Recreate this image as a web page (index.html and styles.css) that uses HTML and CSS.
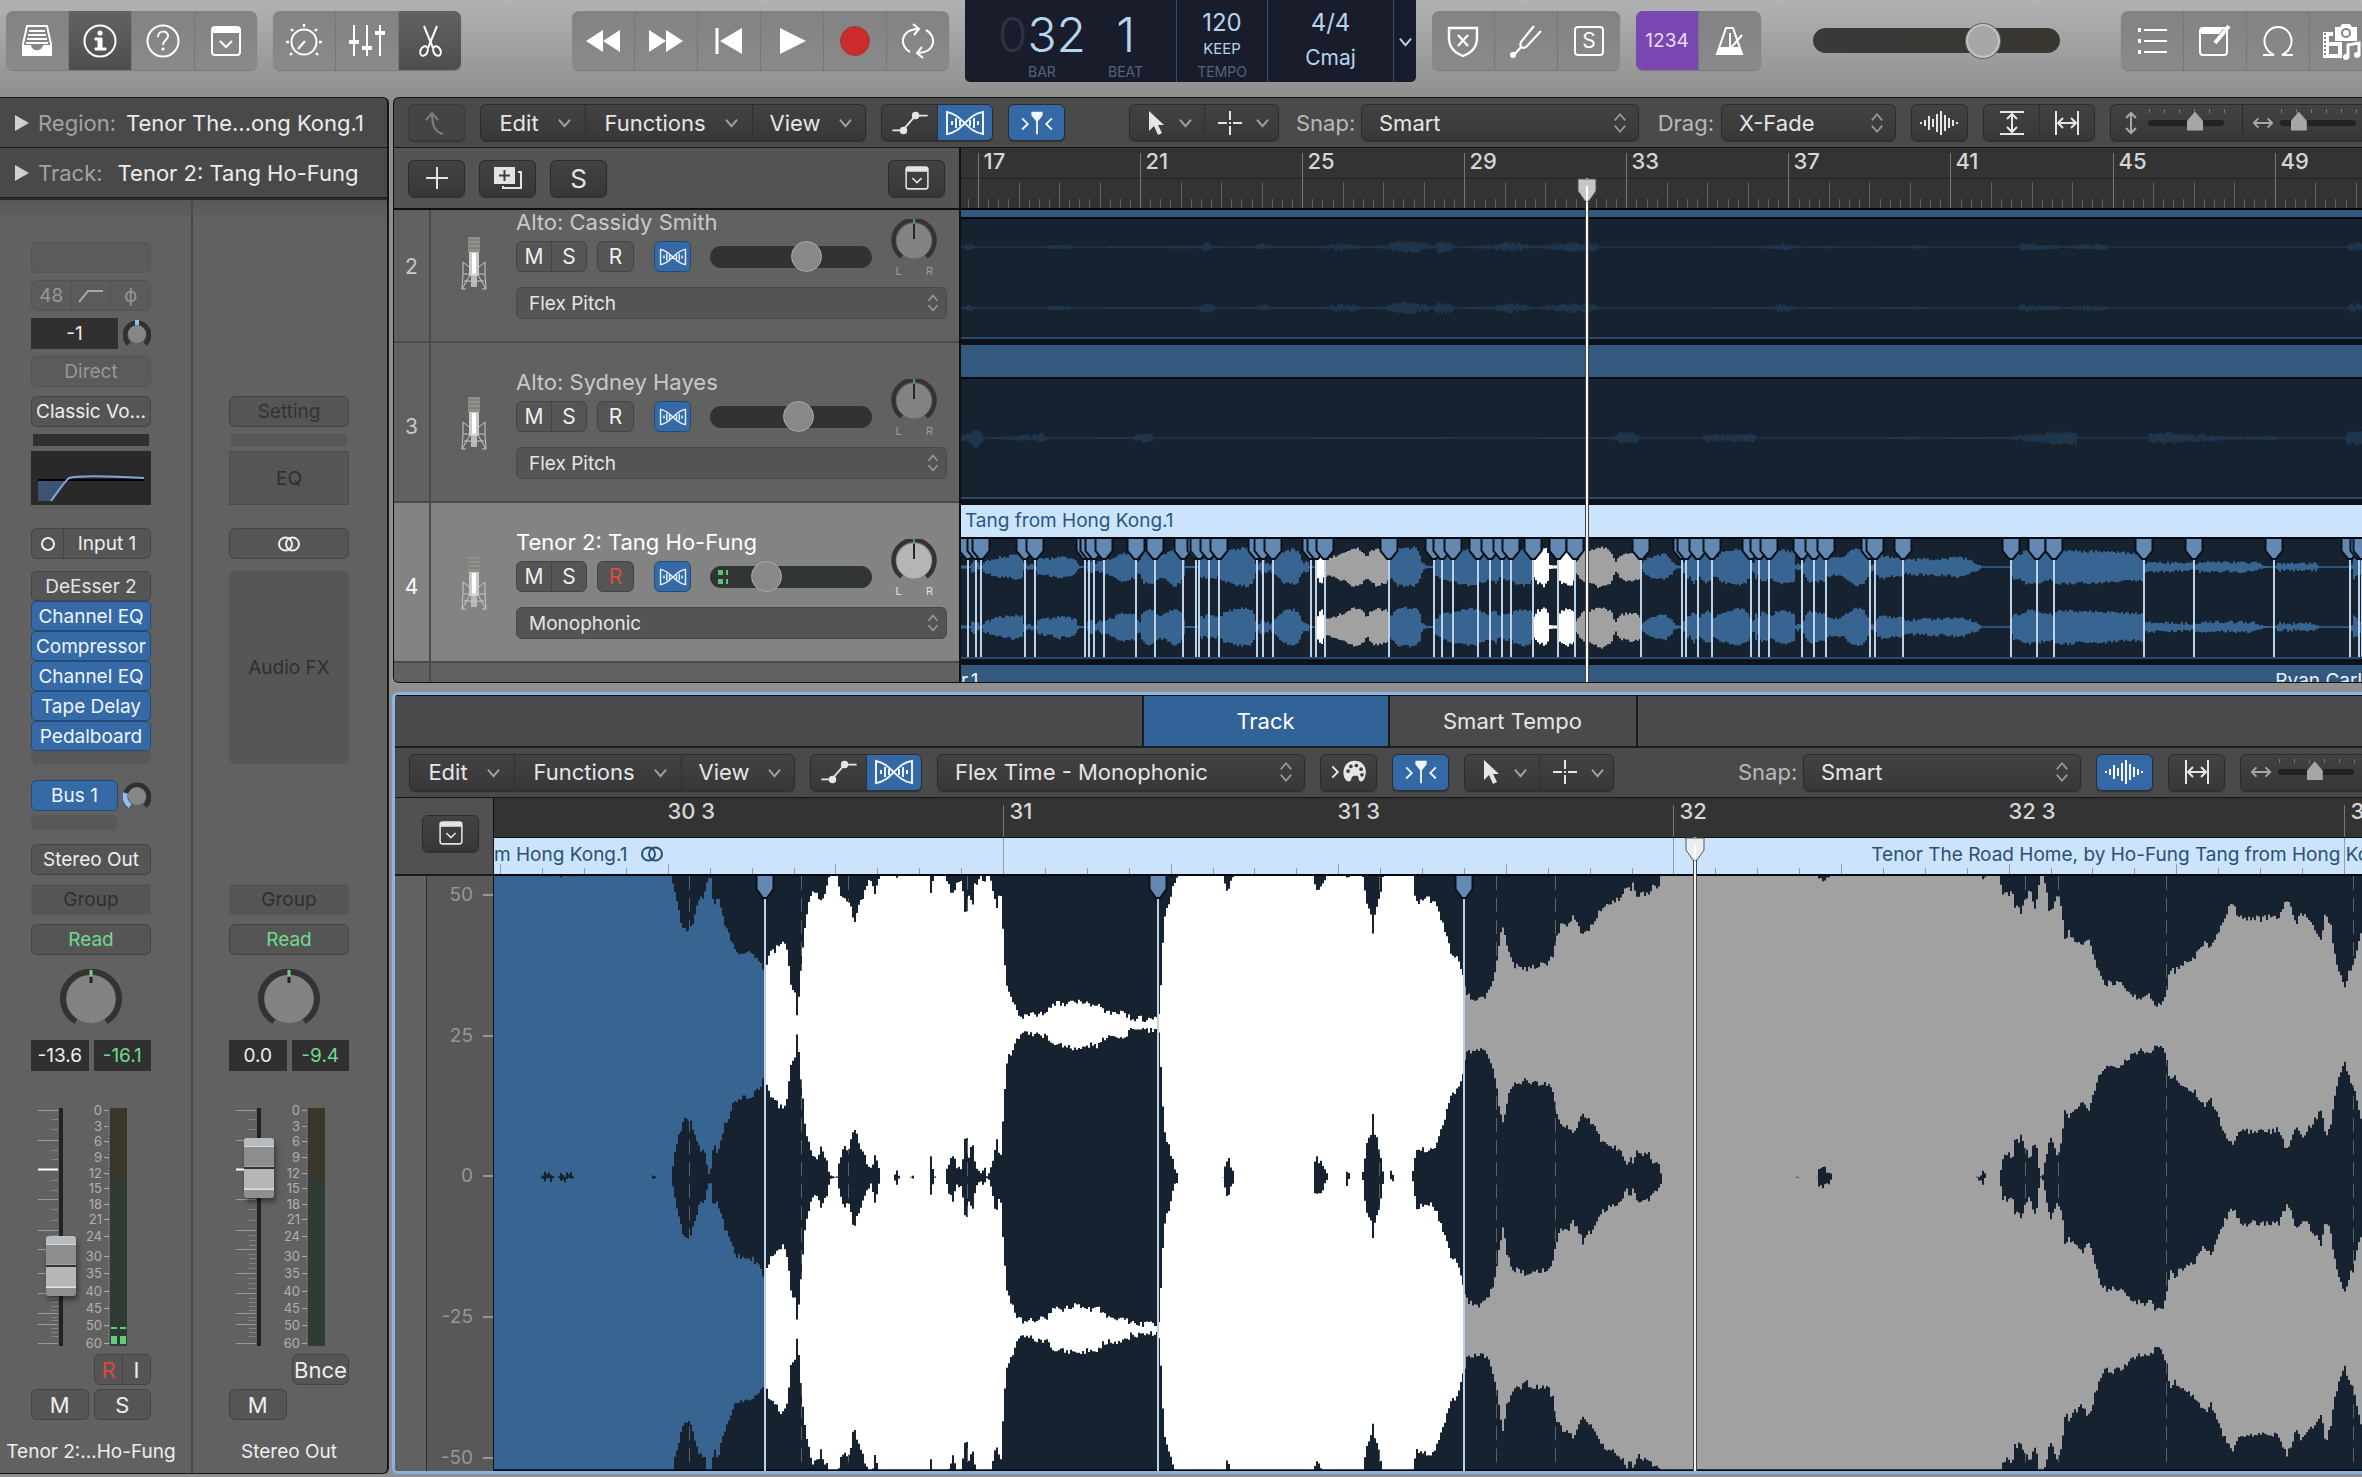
FILE: index.html
```html
<!DOCTYPE html>
<html lang="en">
<head>
    <meta charset="UTF-8">
    <meta name="viewport" content="width=device-width, initial-scale=1.0">
    <title>Tracks</title>
    <link rel="stylesheet" href="styles.css">
</head>
<body>

    <!-- Icon sprite -->
    <svg class="sprite" aria-hidden="true">
        <symbol id="i-library" viewBox="0 0 36 36"><path d="M8 3h20l4 18v11H4V21z" fill="none" stroke="currentColor" stroke-width="2"/><path d="M10 8h16M9 12h18M8 16h20M7 20h22" stroke="currentColor" stroke-width="2"/><path d="M4 22h8c1 7 11 7 12 0h8v10H4z" fill="currentColor"/></symbol>
        <symbol id="i-info" viewBox="0 0 36 36"><circle cx="18" cy="18" r="15.5" fill="none" stroke="currentColor" stroke-width="2"/><circle cx="18" cy="10" r="2.6" fill="currentColor"/><path d="M13 15h7v10h4v2H13v-2h3v-8h-3z" fill="currentColor" stroke="currentColor"/></symbol>
        <symbol id="i-help" viewBox="0 0 36 36"><circle cx="18" cy="18" r="15.5" fill="none" stroke="currentColor" stroke-width="2"/><path d="M13 14c0-7 10-7 10-1 0 4-5 4-5 9" fill="none" stroke="currentColor" stroke-width="2"/><circle cx="18" cy="26" r="1.6" fill="currentColor"/></symbol>
        <symbol id="i-panel" viewBox="0 0 36 36"><rect x="4" y="4" width="28" height="28" rx="3" fill="none" stroke="currentColor" stroke-width="2"/><path d="M4 4h28v6H4z" fill="currentColor"/><path d="M12 18l6 6 6-6" fill="none" stroke="currentColor" stroke-width="2"/></symbol>
        <symbol id="i-dial" viewBox="0 0 40 40"><circle cx="20" cy="21" r="12.5" fill="none" stroke="currentColor" stroke-width="2"/><path d="M14 28l7-8" stroke="currentColor" stroke-width="2"/><path d="M20 3v3M7 8l2 2M33 8l-2 2M2 21h3M35 21h3M6 34l2-2M34 34l-2-2" stroke="currentColor" stroke-width="2.4"/></symbol>
        <symbol id="i-mixer" viewBox="0 0 40 40"><path d="M7 4v31M20 4v31M33 4v31" stroke="currentColor" stroke-width="2"/><path d="M2 19h10v4H2zM15 25h10v4H15zM28 10h10v4H28z" fill="currentColor"/></symbol>
        <symbol id="i-scissors" viewBox="0 0 36 36"><path d="M12 3l9 22M25 3l-9 22" stroke="currentColor" stroke-width="2"/><ellipse cx="12" cy="28" rx="3.5" ry="5" transform="rotate(25 12 28)" fill="none" stroke="currentColor" stroke-width="2"/><ellipse cx="25" cy="28" rx="3.5" ry="5" transform="rotate(-25 25 28)" fill="none" stroke="currentColor" stroke-width="2"/></symbol>
        <symbol id="i-rewind" viewBox="0 0 36 28"><path d="M18 3v22L1 14zM35 3v22L18 14z" fill="currentColor"/></symbol>
        <symbol id="i-forward" viewBox="0 0 36 28"><path d="M1 3v22l17-11zM18 3v22l17-11z" fill="currentColor"/></symbol>
        <symbol id="i-start" viewBox="0 0 36 28"><path d="M6 1v26" stroke="currentColor" stroke-width="3"/><path d="M31 1v26L9 14z" fill="currentColor"/></symbol>
        <symbol id="i-play" viewBox="0 0 36 28"><path d="M6 1v26l26-13z" fill="currentColor"/></symbol>
        <symbol id="i-cycle" viewBox="0 0 40 40"><path d="M12 31C1 25 2 9 20 8M15 3l6 5-5 6M28 9c11 6 10 22-8 23M25 37l-6-5 5-6" fill="none" stroke="currentColor" stroke-width="2"/></symbol>
        <symbol id="i-shield" viewBox="0 0 36 36"><path d="M4 5h28v10c0 10-6 15-14 18C10 30 4 25 4 15z" fill="none" stroke="currentColor" stroke-width="2.4"/><path d="M13 12l10 11M23 12L13 23" stroke="currentColor" stroke-width="2.2"/></symbol>
        <symbol id="i-fork" viewBox="0 0 36 36"><path d="M26 3L13 19c-2 5 2 8 6 4L33 8M14 23L5 33" fill="none" stroke="currentColor" stroke-width="2.2"/><circle cx="5" cy="32" r="3" fill="currentColor"/></symbol>
        <symbol id="i-metronome" viewBox="0 0 36 36"><path d="M14 5h7l9 26H5z" fill="none" stroke="currentColor" stroke-width="2"/><path d="M7 24h21l3 8H4zM17 10h2v14h-2z" fill="currentColor"/><path d="M17 27L30 12" stroke="currentColor" stroke-width="2"/></symbol>
        <symbol id="i-list" viewBox="0 0 36 36"><path d="M10 7h23M10 18h23M10 29h23" stroke="currentColor" stroke-width="2"/><path d="M4 5h3v4H4zM4 16h3v4H4zM4 27h3v4H4z" fill="currentColor"/></symbol>
        <symbol id="i-note" viewBox="0 0 36 36"><rect x="3" y="5" width="27" height="27" rx="3" fill="none" stroke="currentColor" stroke-width="2"/><path d="M3 5h24l-5 6H3z" fill="currentColor"/><path d="M18 20L32 3" stroke="currentColor" stroke-width="4"/></symbol>
        <symbol id="i-loop" viewBox="0 0 36 36"><path d="M3 32h11c-16-8-10-28 4-28s20 20 4 28h11" fill="none" stroke="currentColor" stroke-width="2"/></symbol>
        <symbol id="i-media" viewBox="0 0 40 40"><path d="M14 6h5l2-3h8l2 3h5v14H14z" fill="currentColor"/><circle cx="25" cy="12" r="4" fill="none" stroke="#858585" stroke-width="2"/><path d="M2 11h10v10h9v16H2z" fill="currentColor"/><path d="M8 15h4v6H8zM8 25h9v8H8z" fill="#858585"/><path d="M4 12v24" stroke="#858585" stroke-width="2" stroke-dasharray="2 2"/><path d="M27 37V24l11-2v13" fill="none" stroke="currentColor" stroke-width="3"/><circle cx="25" cy="36" r="3" fill="currentColor"/><circle cx="36" cy="34" r="3" fill="currentColor"/></symbol>
        <symbol id="i-back" viewBox="0 0 30 30"><path d="M21 26c-8-2-11-8-11-21M4 12l6-7 6 7" fill="none" stroke="currentColor" stroke-width="2"/></symbol>
        <symbol id="i-chev" viewBox="0 0 14 14"><path d="M1 4l6 7 6-7" fill="none" stroke="currentColor" stroke-width="2"/></symbol>
        <symbol id="i-updown" viewBox="0 0 16 24"><path d="M2 9l6-7 6 7M2 15l6 7 6-7" fill="none" stroke="currentColor" stroke-width="2"/></symbol>
        <symbol id="i-auto" viewBox="0 0 40 28"><path d="M1 22h11L26 6h13" fill="none" stroke="currentColor" stroke-width="2"/><circle cx="13" cy="22" r="4" fill="currentColor"/><circle cx="26" cy="6" r="4" fill="currentColor"/></symbol>
        <symbol id="i-flex" viewBox="0 0 40 26"><path d="M2 2c16 3 20 20 36 22V2C22 4 18 22 2 24z" fill="none" stroke="currentColor" stroke-width="2"/><path d="M7 11v4M11 8v10M15 10v6M25 10v6M29 8v10M33 11v4" stroke="currentColor" stroke-width="2"/></symbol>
        <symbol id="i-catch" viewBox="0 0 36 28"><path d="M12 2h12v4l-5 6h-2l-5-6z" fill="currentColor"/><path d="M18 10v16M2 9l6 6-6 6M34 9l-6 6 6 6" fill="none" stroke="currentColor" stroke-width="2"/></symbol>
        <symbol id="i-arrow" viewBox="0 0 18 26"><path d="M2 1v20l5-5 4 9 4-2-4-8h6z" fill="currentColor"/></symbol>
        <symbol id="i-cross" viewBox="0 0 24 24"><path d="M12 0v9M12 15v9M0 12h9M15 12h9M11 12h2" stroke="currentColor" stroke-width="2"/></symbol>
        <symbol id="i-wave" viewBox="0 0 40 26"><path d="M1 12v2M5 10v6M9 6v14M13 9v8M17 4v18M21 1v24M25 5v16M29 8v10M33 10v6M37 12v2" stroke="currentColor" stroke-width="2"/></symbol>
        <symbol id="i-vfit" viewBox="0 0 26 26"><path d="M1 2h24M1 24h24M13 5v16M8 9l5-5 5 5M8 17l5 5 5-5" fill="none" stroke="currentColor" stroke-width="2"/></symbol>
        <symbol id="i-hfit" viewBox="0 0 26 26"><path d="M2 1v24M24 1v24M5 13h16M9 8l-5 5 5 5M17 8l5 5-5 5" fill="none" stroke="currentColor" stroke-width="2"/></symbol>
        <symbol id="i-varrow" viewBox="0 0 14 24"><path d="M7 2v20M2 7l5-5 5 5M2 17l5 5 5-5" fill="none" stroke="currentColor" stroke-width="2"/></symbol>
        <symbol id="i-harrow" viewBox="0 0 24 14"><path d="M2 7h20M7 2L2 7l5 5M17 2l5 5-5 5" fill="none" stroke="currentColor" stroke-width="2"/></symbol>
        <symbol id="i-palette" viewBox="0 0 40 28"><path d="M2 8l6 6-6 6" fill="none" stroke="currentColor" stroke-width="2"/><path d="M26 2c8 0 13 6 12 14-1 6-3 9-6 8-2-1-1-5-3-6h-4c-3 1-2 5-4 6-4 1-7-4-7-9 0-8 5-13 12-13z" fill="currentColor"/><g fill="#3c3c3c"><circle cx="19" cy="13" r="2"/><circle cx="22" cy="8" r="2"/><circle cx="28" cy="7" r="2"/><circle cx="33" cy="11" r="2"/><circle cx="34" cy="17" r="2"/></g></symbol>
        <symbol id="i-plus" viewBox="0 0 24 24"><path d="M12 1v22M1 12h22" stroke="currentColor" stroke-width="2"/></symbol>
        <symbol id="i-dup" viewBox="0 0 30 24"><path d="M1 1h21v17H1z" fill="currentColor"/><path d="M11.500 4v11M6 9.500h11" stroke="#3e3e3e" stroke-width="2"/><path d="M25 6h3v16H10v-2" fill="none" stroke="currentColor" stroke-width="2"/></symbol>
        <symbol id="i-stereo" viewBox="0 0 24 16"><circle cx="8.500" cy="8" r="6.500" fill="none" stroke="currentColor" stroke-width="2"/><circle cx="15.500" cy="8" r="6.500" fill="none" stroke="currentColor" stroke-width="2"/></symbol>
        <symbol id="i-mic" viewBox="0 0 26 54"><path d="M7 1h12v15H7z" fill="#918f88"/><path d="M7 4h12M7 8h12M7 12h12" stroke="#77756f"/><path d="M8 16h10v24H8z" fill="#c9cbc8"/><path d="M11 17h4v22h-4z" fill="#fff"/><path d="M10 40h6v11h-6z" fill="#b7bab6"/><path d="M2 26l6 5M24 26l-6 5M2 26v12l-1 15M24 26v12l1 15M1 53l8-14M25 53l-8-14M2 38h22M3 45h20M1 53h4M21 53h4" fill="none" stroke="#c3ccc6"/></symbol>
        <symbol id="i-knob" viewBox="0 0 46 46"><path d="M10.600 37.700A20.500 20.500 0 1 1 35.400 37.700" fill="none" stroke="#333" stroke-width="4.500"/><circle cx="23" cy="22" r="17.500" fill="currentColor"/><path d="M23 4v16" stroke="#252525" stroke-width="2"/><path d="M23 0v5" stroke="#5fb676" stroke-width="1.500"/></symbol>
        <symbol id="i-pan" viewBox="0 0 62 58"><path d="M16 52.500A28 27 0 1 1 46 52.500" fill="none" stroke="#333" stroke-width="6"/><ellipse cx="31" cy="30" rx="24.500" ry="24" fill="#838383"/><path d="M31 8v6" stroke="#222" stroke-width="3"/><path d="M31 1v6" stroke="#6fd088" stroke-width="3"/></symbol>
        <symbol id="i-head" viewBox="0 0 22 24"><path d="M2 1h18v12l-7 10H9L2 13z" fill="currentColor" stroke="#555"/><path d="M11 8v15" stroke="#fff" stroke-width="2"/></symbol>
    </svg>

    <header class="control-bar">
        <div class="bar-group">
            <button aria-label="Library"><svg class="ico36"><use href="#i-library"/></svg></button>
            <button class="pressed" aria-label="Inspector"><svg class="ico36"><use href="#i-info"/></svg></button>
            <button aria-label="Quick help"><svg class="ico36"><use href="#i-help"/></svg></button>
            <button aria-label="Toolbar"><svg class="ico36"><use href="#i-panel"/></svg></button>
        </div>
        <div class="bar-group">
            <button aria-label="Smart controls"><svg class="ico40"><use href="#i-dial"/></svg></button>
            <button aria-label="Mixer"><svg class="ico40"><use href="#i-mixer"/></svg></button>
            <button class="pressed" aria-label="Editors"><svg class="ico36"><use href="#i-scissors"/></svg></button>
        </div>
        <div class="bar-group transport">
            <button aria-label="Rewind"><svg class="ico-t"><use href="#i-rewind"/></svg></button>
            <button aria-label="Forward"><svg class="ico-t"><use href="#i-forward"/></svg></button>
            <button aria-label="Go to beginning"><svg class="ico-t"><use href="#i-start"/></svg></button>
            <button aria-label="Play"><svg class="ico-t"><use href="#i-play"/></svg></button>
            <button aria-label="Record"><span class="record-dot"></span></button>
            <button aria-label="Cycle"><svg class="ico40"><use href="#i-cycle"/></svg></button>
        </div>
        <div class="lcd">
            <div class="lcd-position">
                <div><span class="lcd-big"><i>0</i>32</span><small>BAR</small></div>
                <div><span class="lcd-big">1</span><small>BEAT</small></div>
            </div>
            <div class="lcd-tempo"><span>120</span><b>KEEP</b><small>TEMPO</small></div>
            <div class="lcd-key"><span>4/4</span><span>Cmaj</span></div>
            <button class="lcd-menu" aria-label="Display mode"><svg class="chev"><use href="#i-chev"/></svg></button>
        </div>
        <div class="bar-group">
            <button aria-label="Replace"><svg class="ico36"><use href="#i-shield"/></svg></button>
            <button aria-label="Tuner"><svg class="ico36"><use href="#i-fork"/></svg></button>
            <button aria-label="Solo"><span class="solo-box">S</span></button>
        </div>
        <div class="bar-group">
            <button class="count-in">1234</button>
            <button aria-label="Metronome"><svg class="ico36"><use href="#i-metronome"/></svg></button>
        </div>
        <input type="range" class="volume master" value="72" aria-label="Master volume">
        <div class="bar-group">
            <button aria-label="List editors"><svg class="ico36"><use href="#i-list"/></svg></button>
            <button aria-label="Note pad"><svg class="ico36"><use href="#i-note"/></svg></button>
            <button aria-label="Loops"><svg class="ico36"><use href="#i-loop"/></svg></button>
            <button aria-label="Browsers"><svg class="ico40"><use href="#i-media"/></svg></button>
        </div>
    </header>

    <div class="workspace">

        <!-- Inspector -->
        <aside class="inspector">
            <button class="disclosure"><i></i><span>Region:</span> Tenor The...ong Kong.1</button>
            <button class="disclosure"><i></i><span>Track:</span> Tenor 2: Tang Ho-Fung</button>
            <div class="strips">
                <section class="strip">
                    <div class="cell">
                        <div class="slot faint"></div>
                        <div class="split faint">
                            <button>48</button>
                            <button aria-label="High pass"><svg width="26" height="16"><path d="M1 14L10 3h15" fill="none" stroke="#a5a5a5" stroke-width="2"/></svg></button>
                            <button>ϕ</button>
                        </div>
                        <div class="with-knob">
                            <output class="readout">-1</output>
                            <svg class="mini-knob" viewBox="0 0 28 28"><path d="M6 24A12 12 0 1 1 22 24" fill="none" stroke="#303030" stroke-width="5"/><circle cx="14" cy="14" r="9" fill="#868686"/><path d="M14 0v5" stroke="#8fc0f0" stroke-width="4"/></svg>
                        </div>
                        <button class="slot faint">Direct</button>
                    </div>
                    <div class="cell">
                        <button class="slot">Classic Vo...</button>
                        <div class="gain-bar"></div>
                        <svg class="eq-view" viewBox="0 0 120 54"><path d="M7 29h14l16-1-17 22H7z" fill="#3d536f"/><path d="M7 29h106" stroke="#000" stroke-width="2"/><path d="M20 50C26 42 33 31 38 27c10-3 40-2 75 0" fill="none" stroke="#7fa8dc" stroke-width="2"/></svg>
                    </div>
                    <div class="cell">
                        <div class="split input-slot">
                            <button aria-label="Mono"><svg width="16" height="16"><circle cx="8" cy="8" r="6" fill="none" stroke="#eee" stroke-width="2"/></svg></button>
                            <button>Input 1</button>
                        </div>
                    </div>
                    <div class="cell fx">
                        <button>DeEsser 2</button>
                        <button class="on">Channel EQ</button>
                        <button class="on">Compressor</button>
                        <button class="on">Channel EQ</button>
                        <button class="on">Tape Delay</button>
                        <button class="on">Pedalboard</button>
                        <div class="tail"></div>
                    </div>
                    <div class="cell send">
                        <div class="with-knob">
                            <button class="slot on">Bus 1</button>
                            <svg class="mini-knob" viewBox="0 0 28 28"><path d="M6 24A12 12 0 1 1 22 24" fill="none" stroke="#303030" stroke-width="5"/><circle cx="14" cy="14" r="9" fill="#868686"/><path d="M7 24A12 12 0 0 1 2.500 11" fill="none" stroke="#8fc0f0" stroke-width="5"/></svg>
                        </div>
                        <div class="tail"></div>
                    </div>
                    <div class="cell out">
                        <button class="slot">Stereo Out</button>
                        <button class="slot dim">Group</button>
                        <button class="slot read">Read</button>
                    </div>
                    <div class="cell"><svg class="pan"><use href="#i-pan"/></svg></div>
                    <div class="cell"><div class="pair"><output class="readout">-13.6</output><output class="readout peak">-16.1</output></div></div>
                    <div class="cell fader">
                        <svg class="fader-scale" data-level="24"></svg>
                        <input type="range" value="28" aria-label="Tenor 2 volume">
                    </div>
                    <div class="cell keys">
                        <div class="split half"><button class="rec">R</button><button>I</button></div>
                        <div class="pair"><button class="slot">M</button><button class="slot">S</button></div>
                    </div>
                    <p class="strip-name">Tenor 2:...Ho-Fung</p>
                </section>
                <section class="strip">
                    <div class="cell"></div>
                    <div class="cell">
                        <button class="slot dark">Setting</button>
                        <div class="gain-bar off"></div>
                        <button class="eq-view off">EQ</button>
                    </div>
                    <div class="cell"><button class="slot" aria-label="Stereo format"><svg width="24" height="16"><use href="#i-stereo"/></svg></button></div>
                    <div class="cell"><button class="fx-empty">Audio FX</button></div>
                    <div class="cell"></div>
                    <div class="cell out last">
                        <button class="slot dim">Group</button>
                        <button class="slot read">Read</button>
                    </div>
                    <div class="cell"><svg class="pan"><use href="#i-pan"/></svg></div>
                    <div class="cell"><div class="pair"><output class="readout">0.0</output><output class="readout peak">-9.4</output></div></div>
                    <div class="cell fader">
                        <svg class="fader-scale" data-level="0"></svg>
                        <input type="range" value="83" aria-label="Stereo Out volume">
                    </div>
                    <div class="cell keys">
                        <button class="slot bounce">Bnce</button>
                        <div class="pair"><button class="slot">M</button></div>
                    </div>
                    <p class="strip-name">Stereo Out</p>
                </section>
            </div>
        </aside>

        <main class="panes">

            <!-- Tracks area -->
            <section class="pane tracks">
                <div class="toolbar">
                    <button class="tool disabled" aria-label="Back"><svg width="30" height="30"><use href="#i-back"/></svg></button>
                    <div class="tool-group menus">
                        <button>Edit<svg class="chev"><use href="#i-chev"/></svg></button>
                        <button>Functions<svg class="chev"><use href="#i-chev"/></svg></button>
                        <button>View<svg class="chev"><use href="#i-chev"/></svg></button>
                    </div>
                    <div class="tool-group">
                        <button aria-label="Automation"><svg class="ico-w"><use href="#i-auto"/></svg></button>
                        <button class="on" aria-label="Flex"><svg class="ico-w"><use href="#i-flex"/></svg></button>
                    </div>
                    <button class="tool on" aria-label="Catch"><svg class="ico-w"><use href="#i-catch"/></svg></button>
                    <div class="tool-group cursors push">
                        <button aria-label="Pointer tool"><svg width="18" height="26"><use href="#i-arrow"/></svg><svg class="chev"><use href="#i-chev"/></svg></button>
                        <button aria-label="Marquee tool"><svg width="24" height="24"><use href="#i-cross"/></svg><svg class="chev"><use href="#i-chev"/></svg></button>
                    </div>
                    <div class="field">
                        <label for="snap">Snap:</label>
                        <div class="select w-snap"><select id="snap"><option>Smart</option><option>Bar</option></select><svg class="updown"><use href="#i-updown"/></svg></div>
                    </div>
                    <div class="field">
                        <label for="drag">Drag:</label>
                        <div class="select w-drag"><select id="drag"><option>X-Fade</option><option>Overlap</option></select><svg class="updown"><use href="#i-updown"/></svg></div>
                    </div>
                    <button class="tool" aria-label="Waveform zoom"><svg class="ico-w"><use href="#i-wave"/></svg></button>
                    <div class="tool-group">
                        <button aria-label="Fit vertically"><svg width="26" height="26"><use href="#i-vfit"/></svg></button>
                        <button aria-label="Fit horizontally"><svg width="26" height="26"><use href="#i-hfit"/></svg></button>
                    </div>
                    <div class="tool-group zooms">
                        <div class="zoom"><svg class="zoom-ico" width="14" height="24"><use href="#i-varrow"/></svg><input type="range" value="65" aria-label="Vertical zoom"></div>
                        <div class="zoom"><svg class="zoom-ico" width="24" height="14"><use href="#i-harrow"/></svg><input type="range" value="18" aria-label="Horizontal zoom"></div>
                    </div>
                </div>
                <div class="tracks-body">
                    <div class="headers">
                        <div class="headers-bar">
                            <button class="tool" aria-label="Add track"><svg width="24" height="24"><use href="#i-plus"/></svg></button>
                            <button class="tool" aria-label="Duplicate track"><svg width="30" height="24"><use href="#i-dup"/></svg></button>
                            <button class="tool letter">S</button>
                            <button class="tool end" aria-label="Header options"><svg width="28" height="28"><use href="#i-panel"/></svg></button>
                        </div>
                        <div class="scroller">
                            <div class="track-list">
                                <article class="track">
                                    <span class="num">2</span>
                                    <svg class="mic"><use href="#i-mic"/></svg>
                                    <div class="track-main">
                                        <h2>Alto: Cassidy Smith</h2>
                                        <div class="track-row">
                                            <div class="split ms"><button>M</button><button>S</button></div>
                                            <button class="small">R</button>
                                            <button class="small on flexed" aria-label="Flex"><svg width="28" height="18"><use href="#i-flex"/></svg></button>
                                            <input type="range" class="volume" value="62" aria-label="Volume">
                                        </div>
                                        <div class="select flat"><select aria-label="Flex mode"><option>Flex Pitch</option><option>Monophonic</option></select><svg class="updown"><use href="#i-updown"/></svg></div>
                                    </div>
                                    <div class="knob"><svg><use href="#i-knob"/></svg><span>L</span><span>R</span></div>
                                </article>
                                <article class="track">
                                    <span class="num">3</span>
                                    <svg class="mic"><use href="#i-mic"/></svg>
                                    <div class="track-main">
                                        <h2>Alto: Sydney Hayes</h2>
                                        <div class="track-row">
                                            <div class="split ms"><button>M</button><button>S</button></div>
                                            <button class="small">R</button>
                                            <button class="small on flexed" aria-label="Flex"><svg width="28" height="18"><use href="#i-flex"/></svg></button>
                                            <input type="range" class="volume" value="56" aria-label="Volume">
                                        </div>
                                        <div class="select flat"><select aria-label="Flex mode"><option>Flex Pitch</option><option>Monophonic</option></select><svg class="updown"><use href="#i-updown"/></svg></div>
                                    </div>
                                    <div class="knob"><svg><use href="#i-knob"/></svg><span>L</span><span>R</span></div>
                                </article>
                                <article class="track selected">
                                    <span class="num">4</span>
                                    <svg class="mic"><use href="#i-mic"/></svg>
                                    <div class="track-main">
                                        <h2>Tenor 2: Tang Ho-Fung</h2>
                                        <div class="track-row">
                                            <div class="split ms"><button>M</button><button>S</button></div>
                                            <button class="small rec">R</button>
                                            <button class="small on flexed" aria-label="Flex"><svg width="28" height="18"><use href="#i-flex"/></svg></button>
                                            <input type="range" class="volume metering" value="31" aria-label="Volume">
                                        </div>
                                        <div class="select flat"><select aria-label="Flex mode"><option>Monophonic</option><option>Flex Pitch</option></select><svg class="updown"><use href="#i-updown"/></svg></div>
                                    </div>
                                    <div class="knob"><svg><use href="#i-knob"/></svg><span>L</span><span>R</span></div>
                                </article>
                                <article class="track"><span class="num"></span></article>
                            </div>
                        </div>
                    </div>
                    <div class="timeline">
                        <svg class="ruler" id="main-ruler"></svg>
                        <div class="scroller">
                            <div class="lanes">
                                <div class="lane"><div class="region-name"></div><svg class="wave" id="wave-2"></svg></div>
                                <div class="lane"><div class="region-name"></div><svg class="wave" id="wave-3"></svg></div>
                                <div class="lane active"><div class="region-name">Tang from Hong Kong.1</div><svg class="wave" id="wave-4"></svg></div>
                                <div class="lane next"><div class="region-name"><span>r.1</span><span class="following">Ryan Carl</span></div></div>
                            </div>
                        </div>
                        <div class="playhead main-head"><svg><use href="#i-head"/></svg></div>
                    </div>
                </div>
            </section>

            <!-- Audio track editor -->
            <section class="pane editor">
                <nav class="tabs">
                    <button class="current">Track</button>
                    <button>Smart Tempo</button>
                </nav>
                <div class="toolbar">
                    <div class="tool-group menus">
                        <button>Edit<svg class="chev"><use href="#i-chev"/></svg></button>
                        <button>Functions<svg class="chev"><use href="#i-chev"/></svg></button>
                        <button>View<svg class="chev"><use href="#i-chev"/></svg></button>
                    </div>
                    <div class="tool-group">
                        <button aria-label="Automation"><svg class="ico-w"><use href="#i-auto"/></svg></button>
                        <button class="on" aria-label="Flex"><svg class="ico-w"><use href="#i-flex"/></svg></button>
                    </div>
                    <div class="select w-flex"><select aria-label="Flex mode"><option>Flex Time - Monophonic</option><option>Flex Pitch</option></select><svg class="updown"><use href="#i-updown"/></svg></div>
                    <button class="tool" aria-label="MIDI out"><svg class="ico-w"><use href="#i-palette"/></svg></button>
                    <button class="tool on" aria-label="Catch"><svg class="ico-w"><use href="#i-catch"/></svg></button>
                    <div class="tool-group cursors">
                        <button aria-label="Pointer tool"><svg width="18" height="26"><use href="#i-arrow"/></svg><svg class="chev"><use href="#i-chev"/></svg></button>
                        <button aria-label="Marquee tool"><svg width="24" height="24"><use href="#i-cross"/></svg><svg class="chev"><use href="#i-chev"/></svg></button>
                    </div>
                    <div class="field far">
                        <label for="editor-snap">Snap:</label>
                        <div class="select w-snap"><select id="editor-snap"><option>Smart</option><option>Bar</option></select><svg class="updown"><use href="#i-updown"/></svg></div>
                    </div>
                    <button class="tool on" aria-label="Waveform zoom"><svg class="ico-w"><use href="#i-wave"/></svg></button>
                    <button class="tool" aria-label="Fit horizontally"><svg width="26" height="26"><use href="#i-hfit"/></svg></button>
                    <div class="tool-group zooms">
                        <div class="zoom"><svg class="zoom-ico" width="24" height="14"><use href="#i-harrow"/></svg><input type="range" value="48" aria-label="Horizontal zoom"></div>
                    </div>
                </div>
                <div class="editor-body">
                    <div class="gutter">
                        <div class="gutter-top"><button class="tool" aria-label="Display options"><svg width="28" height="28"><use href="#i-panel"/></svg></button></div>
                        <div class="gutter-scale">
                            <div class="scale-labels"><span>50</span><span>25</span><span>0</span><span>-25</span><span>-50</span></div>
                        </div>
                    </div>
                    <div class="stage">
                        <svg class="ruler" id="editor-ruler"></svg>
                        <div class="editor-region">
                            <span class="left-name">m Hong Kong.1 <svg width="24" height="16"><use href="#i-stereo"/></svg></span>
                            <span class="right-name">Tenor The Road Home, by Ho-Fung Tang from Hong Kong</span>
                            <svg class="region-ticks" id="region-ticks"></svg>
                        </div>
                        <svg class="big-wave" id="big-wave" viewBox="0 0 1868 595" preserveAspectRatio="none"></svg>
                        <div class="playhead editor-head"><svg><use href="#i-head"/></svg></div>
                    </div>
                </div>
            </section>
        </main>
    </div>

    <script src="script.js"></script>
</body>
</html>
```

FILE: styles.css
```css
* {
    box-sizing: border-box;
}
html, body {
    height: 100%;
}
body {
    margin: 0;
    display: flex;
    flex-direction: column;
    overflow: hidden;
    background: #8f8f8f;
    color: #e4e4e4;
    font-family: Inter, "Liberation Sans", sans-serif;
    font-size: 21px;
}
button, select, input {
    font: inherit;
    color: inherit;
    margin: 0;
}
button {
    padding: 0;
    border: 0;
    background: none;
    display: flex;
    align-items: center;
    justify-content: center;
    white-space: nowrap;
}
svg {
    display: block;
    flex: none;
}
.sprite {
    position: absolute;
    width: 0;
    height: 0;
}
.ico36 { width: 36px; height: 36px; }
.ico40 { width: 40px; height: 40px; }
.ico-t { width: 36px; height: 28px; }
.ico-w { width: 40px; height: 26px; }
.chev { width: 13px; height: 13px; color: #a2a2a2; }

/* Control bar */
.control-bar {
    flex: none;
    height: 97px;
    padding: 11px 0 0 6px;
    display: flex;
    align-items: flex-start;
    gap: 16px;
    background: linear-gradient(#b2b2b2, #8f8f8f);
    color: #fff;
}
.bar-group {
    flex: none;
    display: flex;
    height: 59px;
    border-radius: 7px;
    overflow: hidden;
    background: linear-gradient(#828282, #8a8a8a);
    box-shadow: 0 1px 1px #777;
}
.bar-group button {
    width: 62px;
}
.bar-group button + button {
    width: 63px;
    border-left: 1px solid #777;
}
.bar-group .pressed {
    background: linear-gradient(#626262, #4e4e4e);
}
.transport {
    margin-left: 95px;
}
.record-dot {
    width: 30px;
    height: 30px;
    border-radius: 50%;
    background: #cc2b2b;
    border: 1px solid #9a3a3a;
}
.solo-box {
    width: 30px;
    height: 30px;
    border: 2px solid #fff;
    border-radius: 4px;
    line-height: 26px;
}
.bar-group .count-in {
    background: #7847b0;
    color: #f0d9ff;
    font-size: 19px;
}
.lcd {
    flex: none;
    display: flex;
    width: 451px;
    height: 82px;
    margin-top: -11px;
    border-radius: 0 0 5px 5px;
    background: #191d2b;
    color: #b7d3ee;
}
.lcd small {
    font-size: 14px;
    line-height: 16px;
    color: #56627b;
}
.lcd-position {
    width: 211px;
    display: flex;
    justify-content: center;
    gap: 22px;
    padding-top: 11px;
}
.lcd-position > div {
    display: flex;
    flex-direction: column;
    align-items: center;
}
.lcd-big {
    font-size: 48px;
    line-height: 48px;
    font-weight: 300;
    margin-bottom: 5px;
}
.lcd-big i {
    font-style: normal;
    color: #2c3345;
}
.lcd-tempo, .lcd-key {
    border-left: 1px solid #345068;
    display: flex;
    flex-direction: column;
    align-items: center;
}
.lcd-tempo {
    width: 91px;
    padding-top: 9px;
}
.lcd-tempo span, .lcd-key span {
    font-size: 24px;
    line-height: 28px;
}
.lcd-tempo b {
    font-weight: 400;
    font-size: 15px;
    line-height: 24px;
}
.lcd-tempo small {
    margin-top: 3px;
}
.lcd-key {
    width: 126px;
    padding-top: 9px;
    gap: 7px;
}
.lcd-key span + span {
    font-size: 21px;
}
.lcd-menu {
    flex: 1;
    border-left: 1px solid #345068;
}
.lcd-menu .chev {
    color: #b7d3ee;
}

/* Horizontal volume sliders */
.volume {
    appearance: none;
    width: 162px;
    height: 22px;
    border-radius: 11px;
    background: #313331;
}
.volume::-webkit-slider-thumb {
    appearance: none;
    width: 31px;
    height: 31px;
    border-radius: 50%;
    background: #878a86;
    border: 1px solid #a9aba8;
}
.volume.metering {
    background: linear-gradient(#5cc476, #5cc476) 8px 4px / 5px 5px no-repeat, linear-gradient(#5cc476, #5cc476) 8px 13px / 5px 5px no-repeat, linear-gradient(#5cc476, #5cc476) 16px 4px / 2px 5px no-repeat, linear-gradient(#5cc476, #5cc476) 16px 13px / 2px 5px no-repeat, #313532;
}
.volume.master {
    flex: none;
    width: 247px;
    height: 25px;
    border-radius: 13px;
    margin: 17px 45px 0 36px;
    background: linear-gradient(90deg, #373b39, #3a3630);
}
.volume.master::-webkit-slider-thumb {
    width: 34px;
    height: 34px;
    background: #a5a8a5;
    border: 2px solid #c3c5c3;
    box-shadow: 0 0 0 1px #666;
}

.workspace {
    flex: 1;
    min-height: 0;
    display: flex;
    gap: 4px;
    padding-bottom: 3px;
}

/* Inspector */
.inspector {
    flex: none;
    width: 389px;
    display: flex;
    flex-direction: column;
    background: #616161;
    border: 1px solid #151515;
    border-width: 1px 2px 1px 0;
    border-radius: 0 6px 6px 0;
    overflow: hidden;
}
.disclosure {
    flex: none;
    height: 50px;
    justify-content: flex-start;
    padding-left: 15px;
    background: #494949;
    border-bottom: 1px solid #1c1c1c;
    font-size: 22px;
    color: #ececec;
}
.disclosure i {
    border: 8px solid transparent;
    border-left: 14px solid #d0d0d0;
    border-right: 0;
    margin-right: 9px;
}
.disclosure span {
    color: #a3a3a3;
    margin-right: 10px;
}
.disclosure + .disclosure span {
    margin-right: 15px;
}
.strips {
    flex: 1;
    min-height: 0;
    display: flex;
    border-top: 2px solid #2a2a2a;
    font-size: 19px;
}
.strip {
    flex: none;
    width: 193px;
    display: grid;
    grid-template-rows: 154px 132px 43px 209px 64px 125px 71px 68px 246px 80px 1fr;
    padding: 42px 0 0 31px;
    border-right: 2px solid #4a4a4a;
    background: linear-gradient(#575757, #616161 20px);
}
.strip + .strip {
    width: 194px;
    border-right: 0;
    padding-left: 36px;
}
.cell {
    display: flex;
    flex-direction: column;
    gap: 7px;
    width: 120px;
}
.slot, .split, .small {
    flex: none;
    height: 31px;
    background: #555;
    border: 1px solid #444;
    border-radius: 6px;
    color: #eee;
}
.slot {
    width: 100%;
}
.faint {
    border-color: #535353;
    background: #5b5b5b;
    color: #979797;
}
.dark {
    color: #323232;
}
.dim {
    border-color: #5a5a5a;
    border-radius: 2px;
    color: #2f2f2f;
}
.read {
    color: #6fdc8c;
}
.on {
    background: #366aa6;
    border-color: #234a77;
    color: #eef5ff;
}
.rec {
    color: #dc4a43;
}
.split {
    display: flex;
    overflow: hidden;
}
.split button {
    flex: 1;
}
.split button + button {
    border-left: 1px solid #444;
}
.faint button + button {
    border-color: #535353;
}
.input-slot button:first-child {
    flex: 0 0 31px;
}
.split .rec {
    color: #dc4a43;
}
.with-knob {
    display: flex;
    gap: 5px;
    align-items: center;
    height: 31px;
}
.mini-knob {
    width: 28px;
    height: 28px;
}
.readout {
    flex: 1;
    height: 31px;
    line-height: 31px;
    text-align: center;
    background: #303030;
    color: #eee;
}
.readout.peak {
    color: #6fdc8c;
}
.gain-bar {
    height: 12px;
    margin: 0 2px -2px;
    background: #303030;
}
.gain-bar.off {
    background: #575757;
}
.eq-view {
    width: 120px;
    height: 54px;
    background: #292929;
}
.eq-view.off {
    background: #555;
    border: 1px solid #4c4c4c;
    color: #2f2f2f;
}
.fx {
    gap: 0;
}
.fx button {
    height: 30px;
    border: 1px solid #234a77;
    border-radius: 5px;
}
.fx button:first-child {
    background: #555;
    border-color: #444;
}
.tail {
    height: 13px;
    border-radius: 0 0 6px 6px;
    background: #585858;
}
.send {
    gap: 4px;
}
.send .slot {
    width: 87px;
}
.send .tail {
    width: 87px;
    height: 15px;
    border-radius: 6px;
}
.out {
    gap: 9px;
}
.out.last {
    padding-top: 40px;
}
.fx-empty {
    height: 193px;
    border-radius: 6px;
    background: #565656;
    color: #2f2f2f;
}
.pan {
    width: 62px;
    height: 58px;
    margin: 0 auto;
}
.pair {
    display: grid;
    grid-template-columns: 1fr 1fr;
    gap: 5px;
}
.fader {
    position: relative;
}
.fader-scale {
    width: 120px;
    height: 240px;
    overflow: visible;
    font-size: 13px;
}
/* The cap sits over the drawn scale */
.fader input {
    position: absolute;
    left: 15px;
    top: 0;
    appearance: none;
    writing-mode: vertical-lr;
    direction: rtl;
    width: 30px;
    height: 238px;
    background: none;
}
.fader input::-webkit-slider-thumb {
    appearance: none;
    width: 30px;
    height: 60px;
    border-radius: 3px;
    background: linear-gradient(#b9bcbe 0 8px, #d6d8da 8px 9px, #8b8d8f 9px 28px, #bbb 29px, #333 29px 31px, #b4b6b8 31px 50px, #e0e2e4 51px 52px, #8d8f91 52px);
    box-shadow: 2px 4px 5px rgba(0, 0, 0, .4);
}
.keys {
    gap: 4px;
    font-size: 22px;
}
.half, .bounce {
    width: 57px;
    align-self: flex-end;
}
.strip-name {
    width: 186px;
    margin: 4px 0 0 -33px;
    text-align: center;
    line-height: 28px;
    color: #eee;
}

/* Panes */
.panes {
    flex: 1;
    min-width: 0;
    display: flex;
    flex-direction: column;
    gap: 9px;
}
.pane {
    min-height: 0;
    display: flex;
    flex-direction: column;
    overflow: hidden;
    border: 1px solid #101010;
    border-right: 0;
    border-radius: 6px 0 0 6px;
    background: #4a4a4a;
}
.tracks {
    flex: 294;
    flex-basis: 0;
}
.editor {
    flex: 391;
    flex-basis: 0;
    border: 3px solid #86b4e4;
    border-right: 0;
    margin-left: -1px;
}
.toolbar {
    flex: none;
    height: 50px;
    padding-left: 14px;
    display: flex;
    align-items: center;
    gap: 15px;
    border-bottom: 1px solid #161616;
    font-size: 22px;
    color: #e6e6e6;
}
.tool, .tool-group, .toolbar .select {
    flex: none;
    height: 37px;
    border: 1px solid #2c2c2c;
    border-radius: 6px;
    background: linear-gradient(#424242, #383838);
    box-shadow: 0 1px 1px #333;
}
.tool {
    width: 57px;
}
.tool.on, .tool-group .on {
    background: #3569a5;
}
.tool.disabled {
    background: #444;
    border-color: #3c3c3c;
    color: #808080;
}
.tool-group {
    display: flex;
    overflow: hidden;
}
.tool-group button {
    width: 55px;
}
.tool-group button + button {
    border-left: 1px solid #303030;
}
.menus .chev {
    margin-left: 19px;
}
.tool-group.menus button {
    width: 104px;
    padding-left: 4px;
}
.tool-group.menus button:nth-child(2) {
    width: 167px;
}
.tool-group.menus button:nth-child(3) {
    width: 113px;
}
.tool-group.cursors button {
    width: 74px;
    gap: 14px;
    padding-left: 4px;
}
.push {
    margin-left: 49px;
}
.field {
    flex: none;
    display: flex;
    align-items: center;
    gap: 7px;
    margin-left: 2px;
    color: #b9b9b9;
}
.field.far {
    margin-left: 109px;
}
.field label {
    width: 58px;
    text-align: right;
}
.select {
    position: relative;
    color: #e6e6e6;
}
.select select {
    appearance: none;
    width: 100%;
    height: 100%;
    padding: 0 30px 0 17px;
    border: 0;
    background: none;
    outline: none;
}
.updown {
    position: absolute;
    right: 11px;
    top: 50%;
    width: 14px;
    height: 22px;
    margin-top: -11px;
    color: #9a9a9a;
    pointer-events: none;
}
.w-snap { width: 278px; }
.w-drag { width: 175px; }
.w-flex { width: 368px; }
.zoom {
    width: 131px;
    display: flex;
    align-items: center;
    gap: 6px;
    padding-left: 9px;
    background: repeating-linear-gradient(90deg, #777 0 1px, transparent 1px 15px) 38px 4px / 76px 4px no-repeat;
}
.zoom + .zoom {
    border-left: 1px solid #2a2a2a;
}
.zoom-ico {
    width: 22px;
    color: #a8a8a8;
}
.zoom input {
    appearance: none;
    width: 76px;
    height: 6px;
    border-radius: 3px;
    background: #232323;
}
.zoom input::-webkit-slider-thumb {
    appearance: none;
    width: 16px;
    height: 19px;
    margin-top: -3px;
    background: #a6a6a6;
    clip-path: polygon(50% 0, 100% 50%, 100% 100%, 0 100%, 0 50%);
}

/* Tracks area */
.tracks-body {
    flex: 1;
    min-height: 0;
    display: flex;
}
.headers {
    flex: none;
    width: 567px;
    display: flex;
    flex-direction: column;
    border-right: 2px solid #101010;
    background: #545454;
}
.headers-bar {
    flex: none;
    height: 62px;
    padding: 0 14px;
    display: flex;
    align-items: center;
    gap: 14px;
    border-bottom: 2px solid #101010;
}
.letter {
    font-size: 26px;
}
.end {
    margin-left: auto;
}
.scroller {
    flex: 1;
    min-height: 0;
    overflow: hidden;
}
.track-list, .lanes {
    margin-top: -27px;
}
.track {
    height: 160px;
    display: flex;
    background: #616161;
    border-bottom: 2px solid #4b4b4b;
    color: #c9c9c9;
}
.num {
    width: 37px;
    flex: none;
    display: flex;
    align-items: center;
    justify-content: center;
    padding-top: 8px;
    border-right: 2px solid #4b4b4b;
}
.mic {
    width: 26px;
    height: 54px;
    margin: 53px 29px 0 30px;
}
.track-main {
    flex: none;
    width: 431px;
    margin-right: -56px;
    padding-top: 25px;
}
.track h2 {
    margin: 0;
    font-size: 22px;
    font-weight: 400;
    line-height: 28px;
}
.track-row {
    display: flex;
    align-items: center;
    margin: 5px 0 15px;
}
.ms {
    width: 71px;
}
.small {
    width: 37px;
    margin-left: 10px;
}
.small.on {
    background: #366aa6;
    border-color: #234a77;
}
.small.rec {
    color: #dc4a43;
}
.flexed {
    margin: 0 19px 0 20px;
}
.select.flat {
    height: 32px;
    border: 1px solid #484848;
    border-radius: 6px;
    background: #545454;
    font-size: 19px;
}
.flat select {
    padding-left: 12px;
}
.flat .updown {
    right: 6px;
    height: 18px;
    margin-top: -9px;
}
.knob {
    align-self: flex-start;
    flex: none;
    width: 46px;
    margin-top: 36px;
    display: flex;
    flex-wrap: wrap;
    justify-content: space-between;
    font-size: 11px;
    line-height: 12px;
    color: #9d9d9d;
}
.knob svg {
    width: 46px;
    height: 46px;
    color: #838383;
}
.knob span {
    width: 15px;
    text-align: center;
}
.track.selected {
    background: #838383;
    color: #fff;
}
.selected .knob {
    color: #e0e0e0;
}
.selected .knob svg {
    color: #b5b5b5;
}
.timeline {
    flex: 1;
    min-width: 0;
    position: relative;
    display: flex;
    flex-direction: column;
    overflow: hidden;
    background: #0b121c;
}
.ruler {
    flex: none;
    width: 100%;
    height: 62px;
    background: #333;
    color: #d6d6d6;
    font-size: 22px;
    font-weight: 500;
}
.lane {
    height: 160px;
    padding-top: 2px;
    border-bottom: 3px solid #0b121c;
}
.region-name {
    height: 32px;
    line-height: 32px;
    padding-left: 4px;
    background: #33597f;
    font-size: 19px;
    color: #e8f2ff;
}
.active .region-name {
    background: #cbe4fc;
    color: #2d5480;
}
.wave {
    width: 100%;
    height: 122px;
    border-top: 2px solid #05090f;
    border-bottom: 2px solid #2d4a69;
    background: #16222f;
}
.next .region-name {
    display: flex;
    padding-left: 0;
}
.following {
    margin-left: auto;
}
/* Playheads lie over the rulers and regions */
.playhead {
    position: absolute;
    top: 30px;
    bottom: 0;
    width: 22px;
    margin-left: -11px;
    color: #c6c6c6;
    background: linear-gradient(90deg, transparent 9px, #444 9px 10px, #f2f2f2 10px 12px, #444 12px 13px, transparent 13px);
}
.playhead svg {
    width: 22px;
    height: 24px;
}
.main-head {
    left: calc(45% - 4px);
}

/* Audio track editor */
.tabs {
    flex: none;
    height: 53px;
    display: flex;
    justify-content: center;
    padding-left: 22px;
    border-bottom: 2px solid #1c1c1c;
    border-top: 1px solid #111;
    font-size: 22px;
    color: #e6e6e6;
}
.tabs button {
    width: 248px;
    border-right: 2px solid #1c1c1c;
}
.tabs .current {
    background: #316399;
    color: #fff;
    border-left: 2px solid #1c1c1c;
}
.editor-body {
    flex: 1;
    min-height: 0;
    display: flex;
}
.gutter {
    flex: none;
    width: 99px;
    display: flex;
    flex-direction: column;
    border-right: 1px solid #111;
    background: #585858;
}
.gutter-top {
    flex: none;
    height: 78px;
    padding: 17px 0 0 27px;
    background: #515151;
    border-bottom: 2px solid #1a1a1a;
}
.gutter-scale {
    flex: 1;
    display: flex;
    padding-left: 32px;
    background: linear-gradient(90deg, #616161 31px, #2a2a2a 31px 32px, #585858 32px);
}
.scale-labels {
    flex: 1;
    display: flex;
    flex-direction: column;
    justify-content: space-between;
    padding-top: 6px;
    text-align: right;
    font-size: 19px;
    line-height: 26px;
    color: #979797;
}
.scale-labels span::after {
    content: "";
    display: inline-block;
    width: 10px;
    height: 2px;
    margin-left: 10px;
    vertical-align: 5px;
    background: #979797;
}
.stage {
    flex: 1;
    min-width: 0;
    position: relative;
    display: flex;
    flex-direction: column;
    overflow: hidden;
    background: #16222f;
}
#editor-ruler {
    height: 39px;
}
.editor-region {
    flex: none;
    height: 39px;
    position: relative;
    display: flex;
    justify-content: space-between;
    overflow: hidden;
    border-top: 1px solid #111;
    border-bottom: 2px solid #05090f;
    background: #cbe4fc;
    color: #2d4f75;
    font-size: 19px;
    line-height: 33px;
    white-space: nowrap;
}
.left-name {
    display: flex;
    align-items: center;
    gap: 12px;
    height: 33px;
}
.right-name {
    margin-right: -30px;
}
.region-ticks {
    position: absolute;
    left: 0;
    top: 0;
    width: 100%;
    height: 100%;
}
.big-wave {
    flex: 1;
    width: 100%;
    min-height: 0;
}
.editor-head {
    top: 39px;
    left: calc(64% + 5px);
    color: #e9eef2;
}
```

FILE: script.js
```js
const NS = 'http://www.w3.org/2000/svg';
const DARK = '#16222f';

function add(parent, name, attrs, text) {
    const el = document.createElementNS(NS, name);
    for (const key in attrs) el.setAttribute(key, attrs[key]);
    if (text !== undefined) el.textContent = text;
    parent.appendChild(el);
    return el;
}

// Repeatable noise so that the edges look like audio peaks
let seed = 7;
function rand() {
    seed = (seed * 16807) % 2147483647;
    return seed / 2147483647;
}

// "x:value x:value" -> [[x, value], ...] in lane pixels
function points(text, offset, sx, sy) {
    return text.trim().split(/\s+/).map(p => {
        const [x, v] = p.split(':').map(Number);
        return [x * sx + offset, v * sy];
    });
}

function valueAt(list, x) {
    for (let i = 1; i < list.length; i++) {
        if (x <= list[i][0]) {
            const [x0, v0] = list[i - 1];
            const [x1, v1] = list[i];
            return x < x0 ? v0 : v0 + (v1 - v0) * (x - x0) / (x1 - x0 || 1);
        }
    }
    return list[list.length - 1][1];
}

// Stepped band around a centre line
function band(list, from, to, center, step, noise) {
    let top = '', bottom = '';
    for (let x = from; x < to; x += step) {
        const v = valueAt(list, x);
        const n = v > 2 ? noise : 0;
        const a = Math.max(0, v + (rand() - .5) * n), b = Math.max(0, v + (rand() - .5) * n);
        const e = Math.min(x + step, to);
        top += `L${x} ${(center - a).toFixed(1)}L${e} ${(center - a).toFixed(1)}`;
        bottom = `L${e} ${(center + b).toFixed(1)}L${x} ${(center + b).toFixed(1)}` + bottom;
    }
    return 'M' + top.slice(1) + bottom + 'Z';
}

// Rulers
const mainRuler = document.getElementById('main-ruler');
add(mainRuler, 'path', { d: 'M0 30.500H4000', stroke: '#222' });
for (let i = -1; i < 400; i++) {
    const x = Math.round(17 + i * 10.13) + .5;
    const bar = i % 16 === 0, beat = i % 4 === 0;
    add(mainRuler, 'path', { d: `M${x} ${bar ? 5 : beat ? 34 : 51}V61`, stroke: bar ? '#777' : '#606060' });
    if (bar && x < 1400) add(mainRuler, 'text', { x: x + 5, y: 21, fill: 'currentColor' }, 17 + i / 4);
}
add(mainRuler, 'path', { d: 'M0 61H4000', stroke: '#060606', 'stroke-width': 2 });

const editorRuler = document.getElementById('editor-ruler');
const ticks = document.getElementById('region-ticks');
for (let i = -12; i < 48; i++) {
    const x = Math.round(509 + i * 41.9) + .5;
    const bar = i % 16 === 0;
    if (bar) {
        add(editorRuler, 'path', { d: `M${x} 7V39`, stroke: '#777' });
        add(ticks, 'path', { d: `M${x} 0V37`, stroke: '#8ba0b5' });
    }
    if (i % 8 === 0 && x > 0 && x < 1868) {
        const name = Math.floor(31 + i / 16) + (bar ? '' : ' 3');
        add(editorRuler, 'text', { x: bar ? x + 6 : x - 1, y: 21, fill: 'currentColor' }, name);
    }
    add(ticks, 'path', { d: `M${x} ${i % 4 ? 30 : 26}V37`, stroke: '#8ba0b5' });
}

// Tracks area
const A = .4464, B = .4477, T = 1 / 3;
const lane2 = points('0:2 10:8 20:8 30:2 185:2 200:6 240:5 250:2 530:4 545:15 560:8 575:2 655:3 670:8 700:3 740:3 790:3 820:4 840:9 880:8 900:2 950:5 965:12 990:15 1010:16 1030:10 1055:3 1068:15 1095:12 1105:2 1190:5 1220:12 1240:10 1270:5 1285:2 1335:10 1400:12 1420:8 1430:2', 0, A, T)
    .concat(points('0:2 200:3 240:4 260:9 280:7 310:2 380:4 390:2 550:3 570:5 600:2 795:2 800:9 850:6 885:6 890:2 935:6 990:8 995:2 1530:2 1535:10 1568:8', 700, B, T));
const lane3 = points('0:8 8:10 20:15 30:28 45:15 48:2 110:5 160:8 180:14 195:2 380:3 405:12 428:12 432:2 1060:3 1095:4 1100:2 1450:3 1480:15 1510:14 1518:2', 0, A, T)
    .concat(points('0:2 90:2 95:10 150:8 205:12 212:2 485:2 570:5 575:2 780:4 830:12 880:16 925:18 930:2 1085:2 1090:12 1130:16 1170:10 1240:8 1250:5 1300:4 1370:6 1380:2 1525:2 1530:16 1568:18', 700, B, T));
const lane4 = points(`0:5 20:3 24:20 30:14 45:4 50:15 80:28 100:32 120:36 135:33 140:6 150:8 165:4 170:22 200:26 220:33 240:28 255:22 262:3 278:2 282:16 290:22 300:8 310:18 325:22 340:28 355:42 370:42 380:35 390:38 392:16 400:18 405:45 415:52 430:50 440:35 455:38 465:46 478:58 490:45 495:38 500:3 530:3 535:45 540:24 550:36 560:34 575:30 580:35 590:46 600:48 615:55 640:57 650:50 655:38 660:4 672:20 690:10 705:28 715:42 725:50 745:52 755:42 762:16 775:12 780:3 790:2 795:16 800:50 808:50 812:25 820:26 835:32 850:38 870:52 880:58 895:50 908:30 912:40 925:55 950:50 955:42 960:30 966:44 975:56 1000:57 1015:58 1025:45 1030:14 1040:4 1055:3 1060:24 1070:32 1080:40 1100:45 1115:50 1135:55 1155:52 1165:45 1180:38 1195:48 1205:30 1212:40 1230:36 1240:50 1260:55 1275:48 1282:30 1290:50 1300:50 1305:60 1313:45 1316:6 1335:4 1340:45 1348:50 1360:55 1370:50 1376:12 1382:30 1395:50 1410:48 1425:60 1440:60 1455:45 1464:12 1475:35 1490:42 1505:40 1518:38 1522:5 1530:20 1540:28 1555:34`, 0, A, T)
    .concat(points(`0:38 10:35 20:25 30:6 45:3 55:35 62:28 70:50 75:40 85:30 95:45 105:50 112:30 120:30 135:45 155:52 175:55 190:45 197:30 203:5 210:40 215:20 222:45 235:38 245:30 255:48 275:50 295:42 298:5 305:10 315:5 320:30 332:50 340:40 350:45 365:40 372:28 390:25 405:30 415:42 430:55 445:55 455:42 462:20 472:5 480:25 490:35 500:32 515:28 530:30 545:20 560:22 600:24 640:25 665:30 685:22 700:14 715:2 780:2 783:40 800:38 815:50 835:48 855:42 870:38 885:50 910:50 940:46 970:48 1000:45 1030:42 1060:40 1078:42 1080:12 1100:14 1140:12 1190:10 1210:16 1250:14 1280:15 1310:14 1330:12 1345:3 1370:2 1378:12 1400:10 1440:12 1460:10 1468:2 1540:2 1545:35 1568:10`, 700, B, T));

function drawLane(id, list, centers, parts) {
    const svg = document.getElementById(id);
    centers.forEach(c => parts.forEach(([from, to, fill]) => {
        add(svg, 'path', { d: band(list, from, to, c, 2, 3), fill });
    }));
    return svg;
}
drawLane('wave-2', lane2, [28, 89], [[0, 1402, '#1f354c']]);
drawLane('wave-3', lane3, [59], [[0, 1402, '#1f354c']]);
const blue = '#386491', grey = '#a1a1a1';
const wave4 = drawLane('wave-4', lane4, [28, 88], [
    [0, 354, blue], [354, 364, '#fff'], [364, 428, grey], [428, 572, blue],
    [572, 614, '#fff'], [614, 680, grey], [680, 1402, blue]
]);

function flexMarker(svg, x, w, h, bottom) {
    add(svg, 'path', { d: `M${x} ${h}V${bottom}`, stroke: '#bdd2e6', 'stroke-width': 2 });
    add(svg, 'path', {
        d: `M${x - w / 2} -1H${x + w / 2}V${h * .6}L${x + 2} ${h}H${x - 2}L${x - w / 2} ${h * .6}Z`,
        fill: '#6389b3', stroke: '#0b121c', 'stroke-width': 2
    });
}
[-6, 16, 33, 45, 143, 166, 278, 286, 298, 321, 393, 434, 497, 527, 534, 555, 578, 663, 677, 699, 785, 796, 815, 959, 1060, 1077, 1103, 1158, 1185, 1212, 1231, 1282, 1337, 1375, 1523]
    .forEach(x => flexMarker(wave4, Math.round(x * A), 17, 20, 118));
[48, 55, 82, 114, 201, 218, 241, 315, 342, 369, 467, 478, 540, 781, 839, 877, 1079, 1191, 1370, 1540, 1558, 1566]
    .forEach(x => flexMarker(wave4, Math.round(700 + x * B), 17, 20, 118));

// Editor waveform: coloured regions with the quiet parts cut out of them
const big = document.getElementById('big-wave');
const quiet = points(`0:0 213:0 218:6 230:6 232:0 238:0 243:8 256:8 261:0 372:0 375:8 377:0 400:0 404:50 410:100 417:145 423:152 428:145 434:100 440:72 447:62 449:40 453:8 456:20 460:80 466:62 470:90 476:130 482:155 488:185 495:202 502:205 512:203 518:212 524:222 530:245 534:258 536:232 541:205 547:200 553:182 560:172 563:185 567:235 570:290 573:300 576:305 578:360 580:366 582:310 585:240 588:180 592:110 597:75 602:45 607:50 613:75 617:55 622:40 626:5 634:0 637:10 640:50 647:72 654:70 660:135 665:100 672:70 680:30 684:15 690:60 694:30 698:0 716:0 719:12 722:12 725:0 741:0 743:8 745:0 768:0 770:55 773:10 776:0 790:0 793:25 801:60 806:25 812:20 815:45 820:130 823:50 829:85 833:30 838:20 842:12 846:25 849:0 854:20 859:50 863:98 867:60 871:60 873:180 877:270 880:305 886:320 890:345 895:357 900:367 935:357 945:336 960:334 980:326 1000:336 1008:332 1015:349 1025:356 1045:356 1055:372 1092:375 1096:360 1098:270 1101:160 1104:105 1108:90 1112:55 1118:20 1123:0 1186:0 1189:25 1193:55 1197:30 1202:0 1315:0 1318:50 1324:40 1330:25 1335:12 1337:0 1362:0 1364:52 1366:0 1385:0 1388:50 1392:90 1397:110 1400:155 1403:110 1408:80 1412:40 1416:0 1423:0 1427:15 1430:0 1456:0 1459:50 1464:85 1466:70 1480:68 1488:80 1495:110 1503:150 1510:200 1518:215 1525:245 1530:280`, -104, .7015, .3935)
    .concat(points(`106:310 115:320 130:325 138:315 145:300 152:265 157:220 162:160 167:130 172:190 178:215 185:245 190:235 205:250 215:240 240:235 250:205 252:165 260:140 266:125 272:135 280:110 288:135 297:165 305:145 315:130 325:95 335:80 350:75 360:60 368:35 374:50 378:30 385:65 395:55 404:60 410:35 418:40 424:15 427:0 645:0 647:3 649:0 678:0 681:20 692:22 700:10 704:0 938:0 942:5 950:20 953:0 976:0 980:50 985:55 992:60 997:45 1001:95 1006:90 1010:105 1015:80 1022:65 1025:40 1032:95 1037:70 1042:0 1046:5 1052:50 1058:110 1064:80 1070:60 1074:70 1078:100 1083:180 1088:150 1098:175 1110:190 1122:165 1130:215 1140:265 1150:285 1160:280 1172:285 1180:295 1195:315 1210:322 1220:315 1230:335 1240:338 1248:300 1253:240 1262:255 1268:240 1280:230 1292:220 1300:200 1310:175 1320:195 1330:160 1340:120 1352:85 1358:80 1364:110 1375:120 1390:115 1400:120 1415:115 1430:120 1438:90 1444:70 1452:90 1458:130 1470:105 1480:125 1492:150 1500:170 1507:105 1515:130 1522:210 1530:260 1538:290 1545:255 1552:235 1560:180 1568:130`, 906, .6135, .3935));

[[0, 271, '#386491'], [271, 970, '#fff'], [970, 1868, '#a1a1a1']].forEach(([from, to, fill]) => {
    add(big, 'rect', { x: from, y: 0, width: to - from, height: 595, fill });
});
// Transient lines only show through the quiet parts
const clip = add(big, 'clipPath', { id: 'quiet-parts' });
[-4, 301, 605].forEach(c => {
    const d = band(quiet, 0, 1868, c, 2, 6);
    add(big, 'path', { d, fill: DARK });
    add(clip, 'path', { d });
});
const transients = add(big, 'g', { 'clip-path': 'url(#quiet-parts)' });
[195, 307, 354, 473, 885, 1002, 1061, 1531, 1564, 1672, 1859].forEach(x => {
    add(transients, 'path', { d: `M${x}.500 0V595`, stroke: '#59636c', 'stroke-dasharray': '14 8' });
});
add(big, 'path', { d: 'M0 594H1868', stroke: '#05090f', 'stroke-width': 2 });
[271, 664, 970].forEach(x => flexMarker(big, x, 17, 22, 595));

// Fader scales and level meters
document.querySelectorAll('.fader-scale').forEach(svg => {
    const long = [2, 32, 61, 91, 122, 141, 165, 185, 205, 216, 235];
    const short = [11, 21, 42, 51, 72, 82, 101, 112, 127, 132, 137, 146, 150, 155, 160, 170, 175, 180, 190, 194, 198, 202, 209, 212, 220, 224, 228];
    long.forEach(y => add(svg, 'path', { d: `M7 ${y}.500H27`, stroke: y === 61 ? '#fff' : '#999', 'stroke-width': y === 61 ? 2 : 1 }));
    short.forEach(y => add(svg, 'path', { d: `M20 ${y}.500H27`, stroke: '#858585' }));
    add(svg, 'rect', { x: 28, y: 0, width: 4, height: 238, fill: '#222' });

    const labels = { 0: 2, 3: 18, 6: 33, 9: 49, 12: 65, 15: 80, 18: 96, 21: 111, 24: 128, 30: 148, 35: 165, 40: 183, 45: 200, 50: 217, 60: 235 };
    for (const db in labels) {
        const y = labels[db];
        add(svg, 'text', { x: 71, y: y + 5, 'text-anchor': 'end', fill: '#b0b0b0' }, db);
        add(svg, 'path', { d: `M73 ${y}.500H78`, stroke: '#aaa' });
    }
    add(svg, 'path', { d: 'M77.500 2V236', stroke: '#909090', 'stroke-dasharray': '1 3' });
    add(svg, 'rect', { x: 79, y: 0, width: 17, height: 238, fill: '#2f3b33' });
    add(svg, 'rect', { x: 79, y: 0, width: 17, height: 70, fill: '#3a3629' });
    if (svg.dataset.level > 0) {
        [80, 89].forEach(x => {
            add(svg, 'rect', { x, y: 228, width: 6, height: 8, fill: '#5fd07a' });
            add(svg, 'rect', { x, y: 219, width: 6, height: 2, fill: '#5fd07a' });
        });
    }
});
```
